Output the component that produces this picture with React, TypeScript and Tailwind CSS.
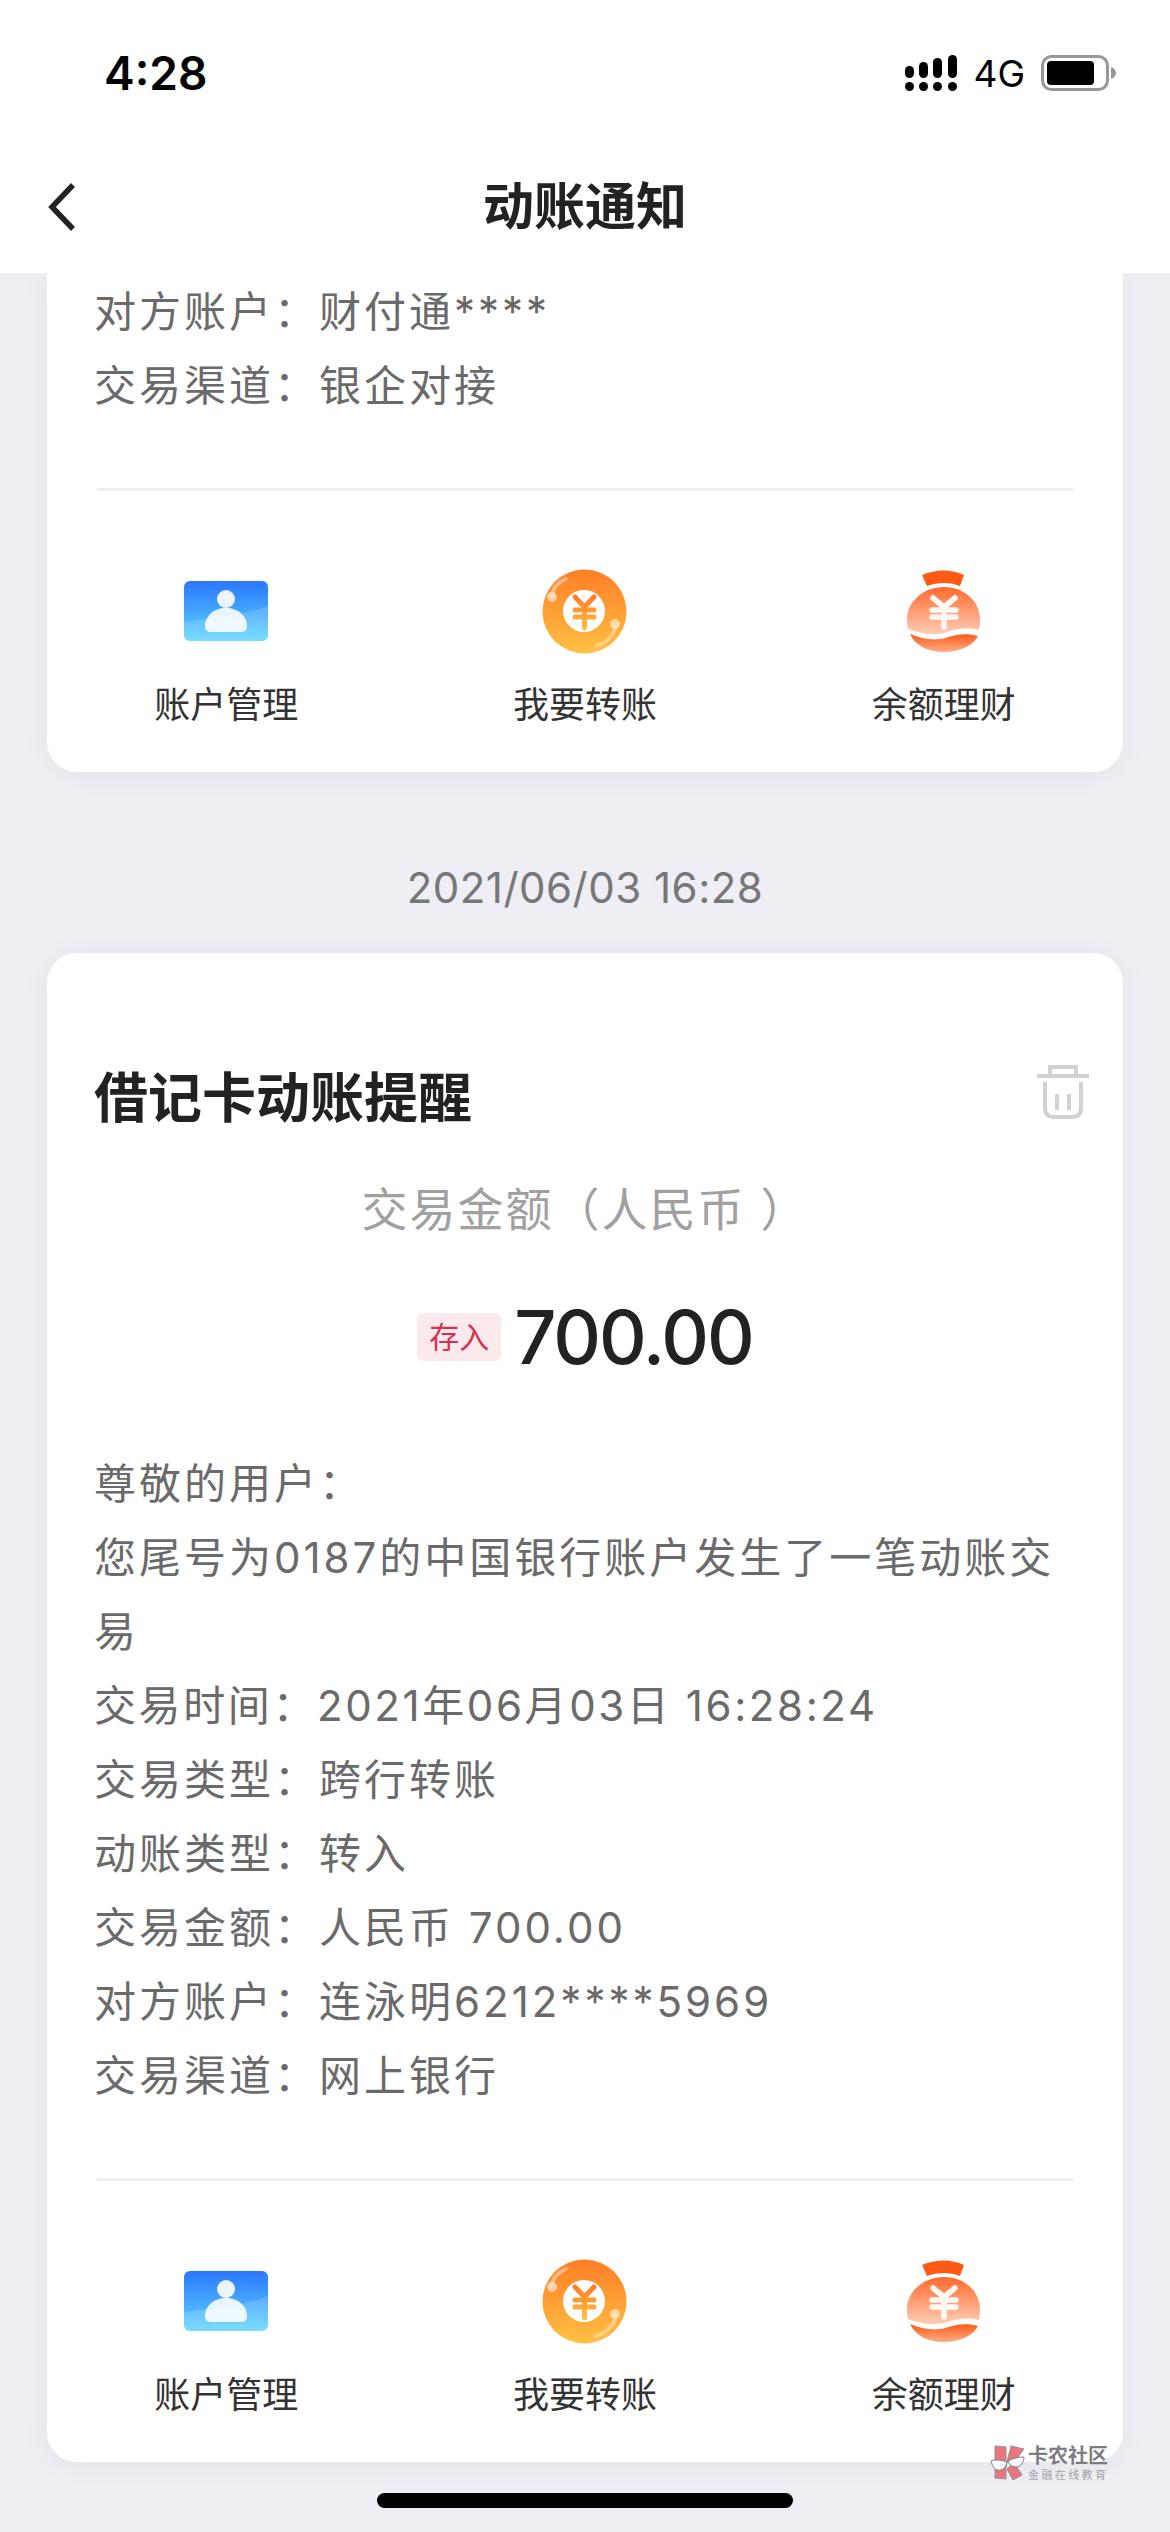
const FONT = "font-['Inter','Noto_Sans_CJK_SC',sans-serif]";

const ACTIONS = [
  { label: "账户管理", icon: <AccountIcon /> },
  { label: "我要转账", icon: <CoinIcon /> },
  { label: "余额理财", icon: <BagIcon /> },
];

const FIRST_LINES = ["对方账户：财付通****", "交易渠道：银企对接"];

const SECOND_LINES = [
  "尊敬的用户：",
  "您尾号为0187的中国银行账户发生了一笔动账交易",
  "交易时间：2021年06月03日 16:28:24",
  "交易类型：跨行转账",
  "动账类型：转入",
  "交易金额：人民币 700.00",
  "对方账户：连泳明6212****5969",
  "交易渠道：网上银行",
];

function AccountIcon() {
  return (
    <svg width="84" height="61" viewBox="0 0 84 61">
      <defs>
        <linearGradient id="acc" x1="0" y1="0" x2="0" y2="1">
          <stop offset="0" stopColor="#2A76FF" />
          <stop offset="1" stopColor="#5FD6FF" />
        </linearGradient>
      </defs>
      <rect width="84" height="60" rx="6" fill="url(#acc)" />
      <path d="M0 41C30 37 62 34 84 25V54a6 6 0 0 1-6 6H6a6 6 0 0 1-6-6Z" fill="#fff" opacity=".16" />
      <circle cx="42" cy="18" r="9" fill="#fff" opacity=".9" />
      <path d="M21 45C21 35 30 27 42 27S63 35 63 45Q63 51 57 51H27Q21 51 21 45Z" fill="#fff" opacity=".88" />
    </svg>
  );
}

function CoinIcon() {
  return (
    <svg width="85" height="85" viewBox="0 0 85 85">
      <defs>
        <linearGradient id="coin" x1="0" y1="0" x2="0" y2="1">
          <stop offset="0" stopColor="#FF7E26" />
          <stop offset="1" stopColor="#FFC043" />
        </linearGradient>
      </defs>
      <circle cx="42.5" cy="42.5" r="42" fill="url(#coin)" />
      <circle cx="42" cy="42" r="21" fill="#fff" />
      <path d="M33 28L42.500 38L52 28M33 41H52M33 48H52M42.500 38V59" fill="none" stroke="url(#coin)" strokeWidth="5" strokeLinecap="round" strokeLinejoin="round" />
      <path d="M10 27C11 19 16 13 24 10" fill="none" stroke="#fff" strokeWidth="4" strokeLinecap="round" opacity=".4" />
      <circle cx="10" cy="28" r="5" fill="#fff" opacity=".55" />
      <path d="M74 56C73 65 65 74 54 77" fill="none" stroke="#fff" strokeWidth="4" strokeLinecap="round" opacity=".35" />
      <circle cx="73" cy="55" r="5" fill="#fff" opacity=".55" />
    </svg>
  );
}

function BagIcon() {
  return (
    <svg width="74" height="84" viewBox="0 0 74 84">
      <defs>
        <linearGradient id="bagTop" x1="0" y1="0" x2="0" y2="1">
          <stop offset="0" stopColor="#FF6A2E" />
          <stop offset="1" stopColor="#FFCDB4" />
        </linearGradient>
        <linearGradient id="bagLow" x1="0" y1="0" x2="0" y2="1">
          <stop offset="0" stopColor="#FF5A14" />
          <stop offset="1" stopColor="#FFAE88" />
        </linearGradient>
      </defs>
      <path d="M15 6C29 0 45 0 57 6L53 17C43 13 31 13 20 17Z" fill="#FF5A14" />
      <path d="M37 18C58 18 73 33 73 50C73 54 72.500 58 72 61C60 58 50 60 40 63C28 67 15 65 1 60C0 56 0 53 0 50C0 33 16 18 37 18Z" fill="url(#bagTop)" />
      <path d="M3 65C15 70 28 72 38 69C50 65 60 64 71 67C66 77 52 83 37 83C20 83 8 76 3 65Z" fill="url(#bagLow)" />
      <path d="M26 29L37 38L48 29M25 41H49M25 48H49M37 38V58" fill="none" stroke="#fff" strokeWidth="5.500" strokeLinecap="round" strokeLinejoin="round" opacity=".92" />
    </svg>
  );
}

function TrashIcon() {
  return (
    <svg width="52" height="54" viewBox="0 0 52 54" fill="none" stroke="#D2D2D2" strokeWidth="4">
      <path d="M0 11H52M13 11V2H39V11" />
      <path d="M8 17V43Q8 52 17 52H35Q44 52 44 43V17" />
      <path d="M20 29V45M32 29V45" />
    </svg>
  );
}

function SignalIcon() {
  return (
    <svg width="52" height="37" viewBox="0 0 52 37" fill="#000">
      <rect x="0" y="11" width="9" height="12" rx="4.500" />
      <rect x="14" y="7" width="9" height="16" rx="4.500" />
      <rect x="28" y="3" width="9" height="20" rx="4.500" />
      <rect x="43" y="0" width="9" height="23" rx="4.500" />
      <circle cx="4.500" cy="31.500" r="4.500" />
      <circle cx="18.500" cy="31.500" r="4.500" />
      <circle cx="32.500" cy="31.500" r="4.500" />
      <circle cx="47.500" cy="31.500" r="4.500" />
    </svg>
  );
}

function BatteryIcon() {
  return (
    <svg width="76" height="36" viewBox="0 0 76 36">
      <rect x="1.500" y="1.500" width="65" height="33" rx="9" fill="none" stroke="#979797" strokeWidth="3" />
      <rect x="6" y="6" width="47" height="24" rx="4" fill="#000" />
      <path d="M70 12C73 13 75 15 75 18S73 23 70 24Z" fill="#979797" />
    </svg>
  );
}

function BackIcon() {
  return (
    <svg width="30" height="48" viewBox="0 0 30 48" fill="none" stroke="#222" strokeWidth="5.500">
      <path d="M26 2L5 24L26 46" />
    </svg>
  );
}

function WatermarkLogo() {
  return (
    <svg width="36" height="36" viewBox="0 0 36 36" stroke="#8B8B90" strokeWidth="1">
      <path d="M5 1L16 2V34L5 33Z" fill="#E9707A" />
      <path d="M21 1L34 4L24 17H17Z" fill="#E9707A" />
      <path d="M17 24L24 18L32 30L23 35Z" fill="#E9707A" />
      <path d="M1 16C6 14 12 15 17 17C16 23 12 26 8 25C4 25 2 20 1 16Z" fill="#fff" stroke="#77777B" />
      <path d="M18 16C23 13 29 12 34 12C34 17 31 22 26 22C22 22 19 19 18 16Z" fill="#fff" stroke="#77777B" />
    </svg>
  );
}

function BodyLines({ lines }: { lines: string[] }) {
  return (
    <div className="pl-[47px] pr-[40px] text-[42px] leading-[74px] tracking-[3px] text-[#6A6A6A]">
      {lines.map((line) => (
        <p key={line} className={line.includes("16:28:24") ? "tracking-[2.600px]" : ""}>
          {line}
        </p>
      ))}
    </div>
  );
}

function ActionRow() {
  return (
    <>
      <div className="mx-[50px] h-[3px] bg-[#EEEEF3]" />
      <div className="grid grid-cols-3 pt-[78px] pb-[42px]">
        {ACTIONS.map(({ label, icon }) => (
          <div key={label} className="flex flex-col items-center">
            <div className="flex h-[84px] items-center justify-center">{icon}</div>
            <span className="mt-[27px] text-[36px] leading-[50px] text-[#333]">{label}</span>
          </div>
        ))}
      </div>
    </>
  );
}

export default function App() {
  return (
    <div className={`relative h-[2532px] w-[1170px] overflow-hidden bg-[#EEEEF4] ${FONT}`}>
      {/* Header */}
      <header className="relative z-10 h-[273px] bg-white">
        <div className="flex h-[146px] items-center justify-between pr-[53px] pl-[104px]">
          <span className="text-[46px] leading-none font-semibold text-black">4:28</span>
          <div className="flex items-center gap-[16px]">
            <SignalIcon />
            <span className="text-[37px] leading-none text-black">4G</span>
            <BatteryIcon />
          </div>
        </div>
        <div className="relative flex h-[120px] items-center justify-center">
          <span className="absolute left-[47px] top-[37px]">
            <BackIcon />
          </span>
          <h1 className="text-[51px] leading-none font-semibold text-[#222]">动账通知</h1>
        </div>
      </header>

      <main className="px-[47px]">
        {/* First card, scrolled under the header */}
        <section className="rounded-b-[30px] bg-white pt-[2px] shadow-[0_2px_30px_rgba(0,0,0,0.05)]">
          <BodyLines lines={FIRST_LINES} />
          <div className="h-[65px]" />
          <ActionRow />
        </section>

        <p className="mt-[91px] text-center text-[42px] leading-[50px] tracking-[0.5px] text-[#777]">2021/06/03 16:28</p>

        {/* Second card */}
        <section className="mt-[40px] rounded-[30px] bg-white pt-[109px] shadow-[0_2px_30px_rgba(0,0,0,0.05)]">
          <div className="flex items-center justify-between pr-[34px] pl-[47px]">
            <h2 className="text-[54px] leading-[74px] font-semibold text-[#222]">借记卡动账提醒</h2>
            <span className="mb-[14px]">
              <TrashIcon />
            </span>
          </div>
          <p className="mt-[43px] text-center text-[46px] leading-[60px] tracking-[2px] text-[#A0A0A0]">交易金额（人民币 ）</p>
          <div className="mt-[58px] flex h-[80px] items-center justify-center gap-[13px]">
            <span className="flex h-[48px] w-[84px] items-center justify-center rounded-[6px] bg-[#FCE9EC] text-[30px] text-[#D9304F]">存入</span>
            <span className="text-[74px] leading-none font-medium tracking-[-2px] text-[#222]">700.00</span>
          </div>
          <div className="h-[70px]" />
          <BodyLines lines={SECOND_LINES} />
          <div className="h-[65px]" />
          <ActionRow />
        </section>
      </main>

      {/* Home indicator */}
      <div className="absolute bottom-[24px] left-[377px] h-[15px] w-[416px] rounded-full bg-black" />

      {/* Watermark */}
      <div className="absolute top-[2444px] left-[990px] flex items-center gap-[2px] opacity-95">
        <WatermarkLogo />
        <div className="flex flex-col">
          <span className="text-[20px] leading-[24px] font-bold text-[#77777B]">卡农社区</span>
          <span className="text-[11px] leading-[14px] tracking-[2.400px] text-[#A0A0A8]">金融在线教育</span>
        </div>
      </div>
    </div>
  );
}
